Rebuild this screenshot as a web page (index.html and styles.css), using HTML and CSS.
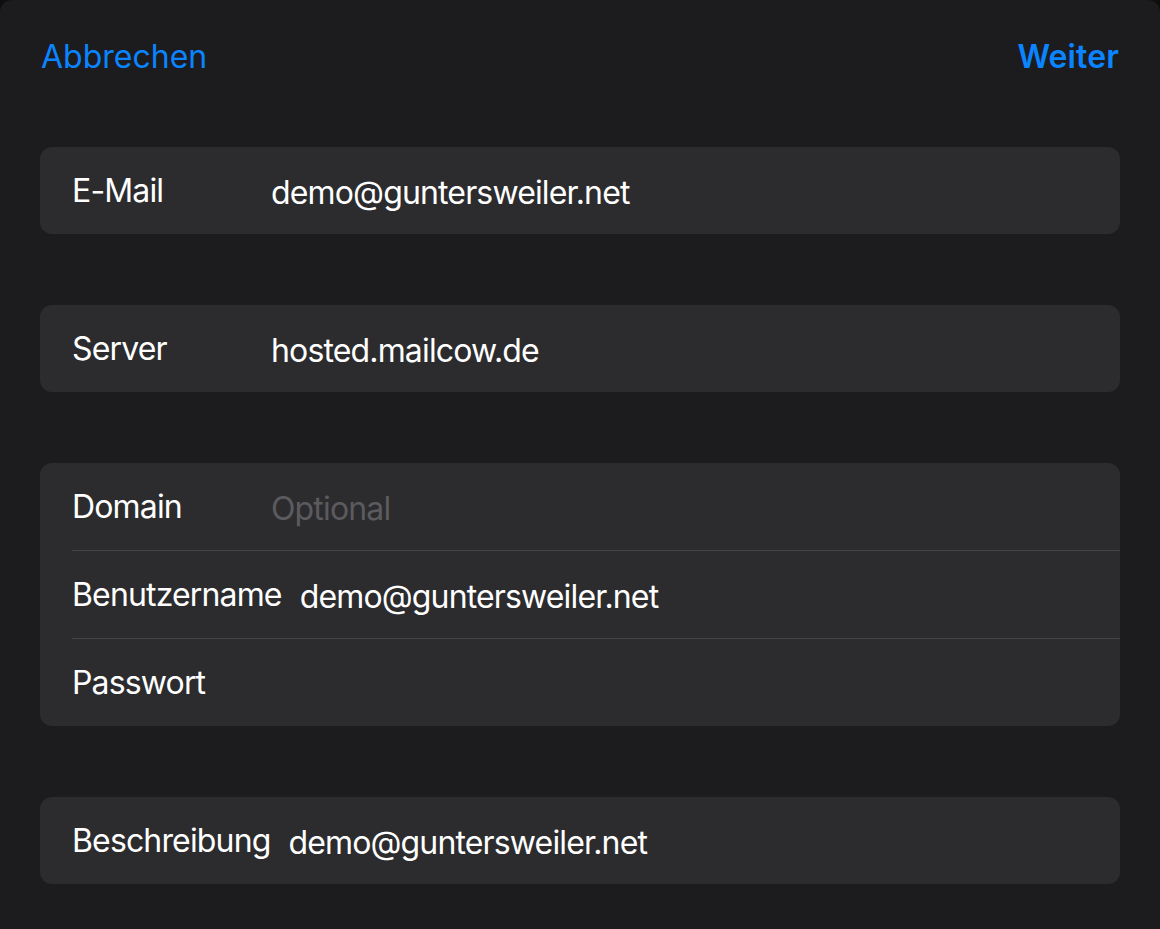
FILE: index.html
```html
<!DOCTYPE html>
<html lang="de">
<head>
<meta charset="utf-8">
<title>Account</title>
<link rel="stylesheet" href="styles.css">
</head>
<body>
<div class="sheet">
  <header class="nav">
    <span class="nav-btn">Abbrechen</span>
    <span class="nav-btn nav-btn--bold">Weiter</span>
  </header>
  <main class="form">
    <section class="group">
      <div class="row"><div class="row-inner"><span class="label">E-Mail</span><span class="value">demo@guntersweiler.net</span></div></div>
    </section>
    <section class="group">
      <div class="row"><div class="row-inner"><span class="label">Server</span><span class="value">hosted.mailcow.de</span></div></div>
    </section>
    <section class="group">
      <div class="row"><div class="row-inner"><span class="label">Domain</span><span class="value value--placeholder">Optional</span></div></div>
      <div class="row"><div class="row-inner"><span class="label">Benutzername</span><span class="value">demo@guntersweiler.net</span></div></div>
      <div class="row"><div class="row-inner"><span class="label">Passwort</span><span class="value"></span></div></div>
    </section>
    <section class="group">
      <div class="row"><div class="row-inner"><span class="label">Beschreibung</span><span class="value">demo@guntersweiler.net</span></div></div>
    </section>
  </main>
</div>
</body>
</html>
```

FILE: styles.css
```css
* { box-sizing: border-box; }
html, body {
  margin: 0;
  padding: 0;
  background: #0e0e0f;
}
body {
  font-family: "Inter", "Liberation Sans", sans-serif;
  -webkit-font-smoothing: antialiased;
}
.sheet {
  width: 1160px;
  height: 929px;
  background: #1c1c1e;
  border-radius: 12px 12px 0 0;
  overflow: hidden;
}
.nav {
  height: 112px;
  padding: 0 41px;
  display: flex;
  align-items: center;
  justify-content: space-between;
}
.nav-btn {
  color: #0a84ff;
  font-size: 32px;
  letter-spacing: 0;
}
.nav-btn--bold {
  font-weight: 600;
  letter-spacing: 0.1px;
}
.form {
  padding: 35px 40px 0 40px;
  display: flex;
  flex-direction: column;
  gap: 71px;
}
.group {
  background: #2c2c2e;
  border-radius: 12px;
  overflow: hidden;
}
.row {
  padding-left: 32px;
}
.row-inner {
  height: 88px;
  display: flex;
  align-items: center;
  gap: 18px;
  border-top: 1px solid #444446;
  color: #ffffff;
  font-size: 32px;
  letter-spacing: -0.85px;
}
.row:first-child .row-inner {
  height: 87px;
  border-top: none;
}
.label {
  min-width: 181px;
  white-space: nowrap;
}
.value {
  padding-top: 3px;
}
.value--placeholder {
  color: #5b5b5f;
}
```
